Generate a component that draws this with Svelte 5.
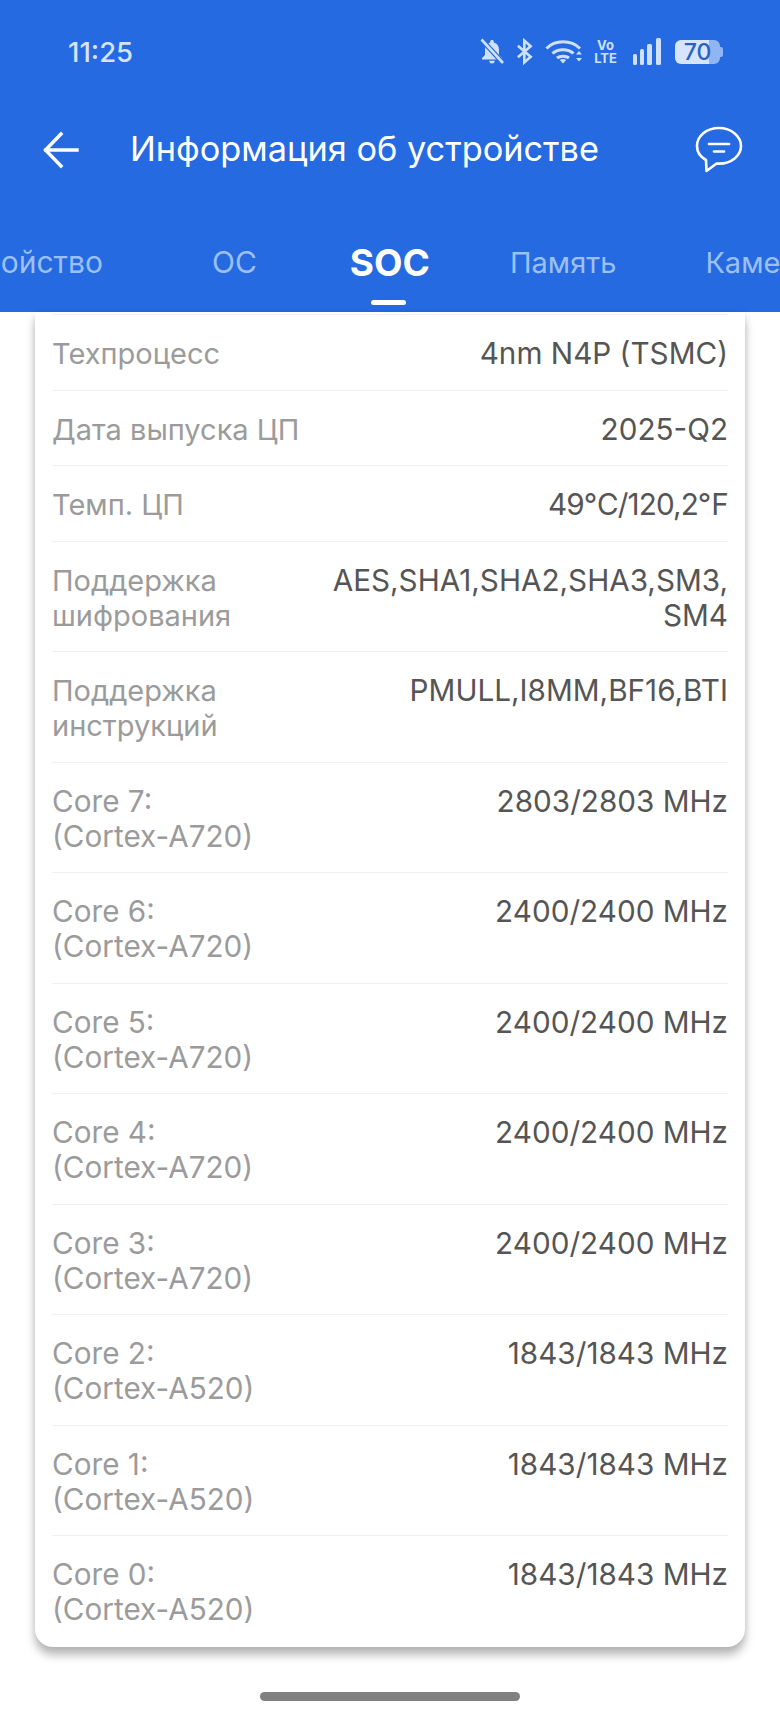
<script>
  const rows = [
    { label: ['Техпроцесс'], value: ['4nm N4P (TSMC)'], ru: true },
    { label: ['Дата выпуска ЦП'], value: ['2025-Q2'], ru: true },
    { label: ['Темп. ЦП'], value: ['49℃/120,2℉'], ru: true, tight: true },
    { label: ['Поддержка', 'шифрования'], value: ['AES,SHA1,SHA2,SHA3,SM3,', 'SM4'], ru: true },
    { label: ['Поддержка', 'инструкций'], value: ['PMULL,I8MM,BF16,BTI'], ru: true },
    { label: ['Core 7:', '(Cortex-A720)'], value: ['2803/2803 MHz'] },
    { label: ['Core 6:', '(Cortex-A720)'], value: ['2400/2400 MHz'] },
    { label: ['Core 5:', '(Cortex-A720)'], value: ['2400/2400 MHz'] },
    { label: ['Core 4:', '(Cortex-A720)'], value: ['2400/2400 MHz'] },
    { label: ['Core 3:', '(Cortex-A720)'], value: ['2400/2400 MHz'] },
    { label: ['Core 2:', '(Cortex-A520)'], value: ['1843/1843 MHz'] },
    { label: ['Core 1:', '(Cortex-A520)'], value: ['1843/1843 MHz'] },
    { label: ['Core 0:', '(Cortex-A520)'], value: ['1843/1843 MHz'] }
  ];
</script>

<div class="page">
  <header class="top">
    <div class="status">
      <span class="time">11:25</span>
      <div class="icons">
        <svg class="i-bell" width="26" height="27" viewBox="0 0 26 26" fill="#cfe0fb">
          <path d="M13 1.500c-1.100 0-1.800.7-1.800 1.700v.7C7.800 4.800 6 7.600 6 11v5.500L3 19.500v1.500h20v-1.500l-3-3V11c0-3.400-1.800-6.200-5.200-7.100v-.7c0-1-.7-1.700-1.800-1.700z"/>
          <path d="M10.300 22.300h5.400a2.700 2.700 0 0 1-5.400 0z"/>
          <path d="M2.500 1 24 24.500" stroke="#256ae0" stroke-width="5"/>
          <path d="M2.500 1 24 24.500" stroke="#cfe0fb" stroke-width="2.600"/>
        </svg>
        <svg class="i-bt" width="17" height="27" viewBox="0 0 18 26" fill="none" stroke="#cfe0fb" stroke-width="2.800">
          <path d="M2 7 15.500 18.500 8.800 24.500V1.500L15.500 7.500 2 19"/>
        </svg>
        <svg class="i-wifi" width="37" height="27" viewBox="0 0 37 26" fill="none" stroke="#cfe0fb" stroke-width="3">
          <path d="M1.500 10C10 1 26 1 35 10"/>
          <path d="M7.500 15c5.500-5 15.500-5 21 0"/>
          <path d="M12 19.500c3-2.500 9-2.500 12 0"/>
          <path d="M14.800 21.500 18 25l3.200-3.500c-1.800-1.500-4.600-1.500-6.400 0z" fill="#cfe0fb" stroke="none"/>
          <path d="M31 16 34 12.500l3 3.500zM31 19.500l3 3.500 3-3.500z" fill="#cfe0fb" stroke="none"/>
        </svg>
        <span class="volte"><span>Vo</span><span>LTE</span></span>
        <svg class="i-sig" width="28" height="27" viewBox="0 0 28 27" fill="#cfe0fb">
          <rect x="0" y="16" width="4" height="11" rx="1.500"/>
          <rect x="7" y="11" width="4" height="16" rx="1.500"/>
          <rect x="14" y="6" width="5" height="21" rx="1.500"/>
          <rect x="23" y="0" width="5" height="27" rx="1.500"/>
        </svg>
        <div class="battery"><div class="fill">70</div><i></i></div>
      </div>
    </div>

    <div class="bar">
      <svg width="40" height="40" viewBox="0 0 40 40" fill="none" stroke="#fff" stroke-width="3.400" stroke-linecap="square">
        <path d="M4 20h31"/><path d="M19 4 3.500 20 19 36"/>
      </svg>
      <h1>Информация об устройстве</h1>
      <svg class="chat" width="50" height="50" viewBox="0 0 50 50" fill="none" stroke="#fff" stroke-width="2.600" stroke-linecap="round" stroke-linejoin="round">
        <path d="M25 3C12.500 3 3 11 3 21c0 6 3.500 11 9 14l.5 11 10-7.500c.8.100 1.700.100 2.500.100 12.500 0 22-8 22-17.600S37.500 3 25 3z"/>
        <path d="M15 19h20"/><path d="M20 26.500h10"/>
      </svg>
    </div>

    <nav class="tabs">
      <span class="tab t0">Устройство</span>
      <span class="tab t1">ОС</span>
      <span class="tab t2 active">SOC</span>
      <span class="tab t3">Память</span>
      <span class="tab t4">Камера</span>
    </nav>
  </header>

  <main class="card">
    {#each rows as row}
      <div class="row">
        <div class="label" class:ru={row.ru}>{#each row.label as l}<div>{l}</div>{/each}</div>
        <div class="value" class:tight={row.tight}>{#each row.value as v}<div>{v}</div>{/each}</div>
      </div>
    {/each}
  </main>

  <div class="home"></div>
</div>

<style>
  :global(body) { margin: 0; background: #fff; }
  .page {
    width: 780px;
    height: 1715px;
    overflow: hidden;
    font-family: Inter, "Noto Sans", sans-serif;
    display: flex;
    flex-direction: column;
    align-items: center;
  }
  .top {
    width: 100%;
    height: 312px;
    flex: none;
    background: #256ae0;
    color: #fff;
    overflow: hidden;
  }
  .status {
    height: 27px;
    padding: 38px 57px 0 68px;
    display: flex;
    align-items: center;
    justify-content: space-between;
  }
  .time { font-size: 27.500px; font-weight: 500; color: #d5e3fb; }
  .icons { display: flex; align-items: center; }
  .i-bt { margin-left: 11px; }
  .i-wifi { margin-left: 12px; }
  .volte { margin-left: 12px; }
  .i-sig { margin-left: 16px; }
  .battery { margin-left: 14px; }
  .volte {
    width: 23px;
    display: flex;
    flex-direction: column;
    align-items: center;
    font-size: 13px;
    line-height: 13px;
    font-weight: 700;
    color: #cfe0fb;
  }
  .battery { display: flex; align-items: center; width: 48px; height: 24px; }
  .fill {
    width: 45px;
    height: 24px;
    border-radius: 6px;
    background: linear-gradient(90deg, #d7e5fc 76%, #8fb6f2 76%);
    color: #2a5fc4;
    font-size: 23px;
    line-height: 24px;
    font-weight: 500;
    text-align: center;
  }
  .battery i { width: 3px; height: 10px; background: #8fb6f2; border-radius: 0 2px 2px 0; }
  .bar {
    display: flex;
    align-items: center;
    height: 60px;
    margin-top: 55px;
    padding: 0 36px 0 42px;
  }
  h1 {
    margin: 0 0 4px 48px;
    flex: 1;
    font-size: 34.300px;
    font-weight: 400;
    color: #fff;
    white-space: nowrap;
  }
  .chat { flex: none; }
  .tabs {
    display: flex;
    align-items: center;
    height: 56px;
    margin-top: 54px;
    white-space: nowrap;
  }
  .tab { position: relative; font-size: 30px; color: #9cc0f5; flex: none; }
  .t0 { width: 103px; display: flex; justify-content: flex-end; }
  .t1 { margin-left: 109px; }
  .t2 { margin-left: 93px; }
  .t3 { margin-left: 80px; font-size: 29px; }
  .t4 { margin-left: 89px; font-size: 29px; }
  .active { font-size: 37px; font-weight: 700; color: #fff; }
  .active::after {
    content: "";
    position: absolute;
    left: 50%;
    bottom: -20px;
    width: 35px;
    height: 5px;
    margin-left: -19px;
    border-radius: 3px;
    background: #fff;
  }
  .card {
    width: 710px;
    box-sizing: border-box;
    padding: 2px 17px 1px;
    background: #fff;
    border-radius: 0 0 18px 18px;
    box-shadow: 0 8px 10px rgba(0, 0, 0, 0.28), 0 0 6px rgba(0, 0, 0, 0.08);
    flex: none;
  }
  .row {
    display: flex;
    justify-content: space-between;
    gap: 16px;
    padding: 21px 0 18.500px;
    border-top: 1px solid #f0f0f0;
    font-size: 29.700px;
    line-height: 35px;
  }
  .label { color: #9b9b9b; white-space: nowrap; }
  .label.ru { font-size: 29px; }
  .value { color: #555; text-align: right; white-space: nowrap; }
  .value.tight { letter-spacing: -0.9px; }
  .home {
    width: 260px;
    height: 9px;
    margin-top: 45px;
    border-radius: 5px;
    background: #808080;
    flex: none;
  }
</style>
